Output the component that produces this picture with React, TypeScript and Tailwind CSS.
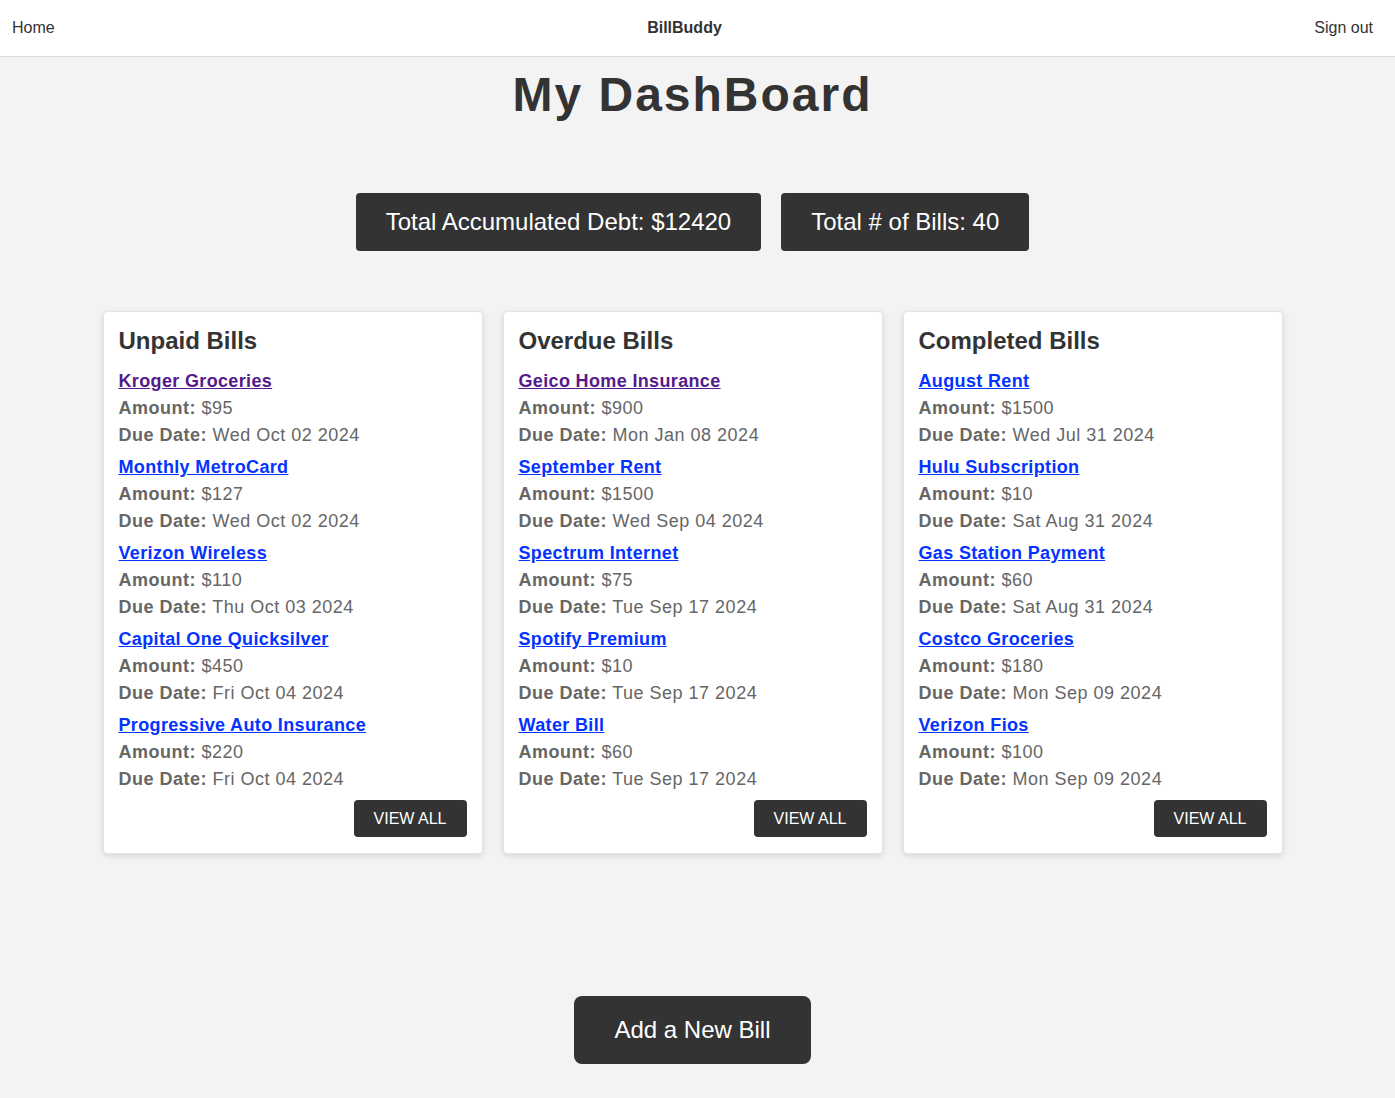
import React from "react";

type Bill = { name: string; amount: string; due: string; visited?: boolean };

const columns: { title: string; bills: Bill[] }[] = [
  {
    title: "Unpaid Bills",
    bills: [
      { name: "Kroger Groceries", amount: "$95", due: "Wed Oct 02 2024", visited: true },
      { name: "Monthly MetroCard", amount: "$127", due: "Wed Oct 02 2024" },
      { name: "Verizon Wireless", amount: "$110", due: "Thu Oct 03 2024" },
      { name: "Capital One Quicksilver", amount: "$450", due: "Fri Oct 04 2024" },
      { name: "Progressive Auto Insurance", amount: "$220", due: "Fri Oct 04 2024" },
    ],
  },
  {
    title: "Overdue Bills",
    bills: [
      { name: "Geico Home Insurance", amount: "$900", due: "Mon Jan 08 2024", visited: true },
      { name: "September Rent", amount: "$1500", due: "Wed Sep 04 2024" },
      { name: "Spectrum Internet", amount: "$75", due: "Tue Sep 17 2024" },
      { name: "Spotify Premium", amount: "$10", due: "Tue Sep 17 2024" },
      { name: "Water Bill", amount: "$60", due: "Tue Sep 17 2024" },
    ],
  },
  {
    title: "Completed Bills",
    bills: [
      { name: "August Rent", amount: "$1500", due: "Wed Jul 31 2024" },
      { name: "Hulu Subscription", amount: "$10", due: "Sat Aug 31 2024" },
      { name: "Gas Station Payment", amount: "$60", due: "Sat Aug 31 2024" },
      { name: "Costco Groceries", amount: "$180", due: "Mon Sep 09 2024" },
      { name: "Verizon Fios", amount: "$100", due: "Mon Sep 09 2024" },
    ],
  },
];

export default function App() {
  return (
    <div className="min-h-[1098px] bg-[#f3f3f3] font-['Liberation_Sans',Arial,sans-serif] text-[#333]">
      <nav className="h-[57px] bg-white border-b border-[#dcdcdc] flex items-center justify-between pl-3 pr-[22px] text-[16px]">
        <a className="text-[#333]">Home</a>
        <span className="font-bold text-[#333]">BillBuddy</span>
        <a className="text-[#333]">Sign out</a>
      </nav>

      <div className="pr-[10px]">
        <h1 className="text-center text-[48px] font-bold tracking-[2px] leading-[56px] mt-[10px] text-[#333]">
          My DashBoard
        </h1>

        <div className="flex justify-center gap-5 mt-[70px]">
          <div className="bg-[#333] text-white text-[24px] rounded-[4px] h-[58px] px-[30px] flex items-center">
            Total Accumulated Debt: $12420
          </div>
          <div className="bg-[#333] text-white text-[24px] rounded-[4px] h-[58px] px-[30px] flex items-center">
            Total # of Bills: 40
          </div>
        </div>

        <div className="flex justify-center gap-5 mt-[60px]">
          {columns.map((col) => (
            <div
              key={col.title}
              className="w-[380px] h-[543px] bg-white rounded-[4px] border border-[#e2e2e2] shadow-[0_2px_6px_rgba(0,0,0,0.12)] px-[15px] pt-[14px] flex flex-col"
            >
              <h2 className="text-[24px] font-bold leading-[30px] text-[#333] mb-[12px]">{col.title}</h2>
              <div className="flex flex-col gap-[5px]">
                {col.bills.map((b) => (
                  <div key={b.name} className="text-[18px] leading-[27px] text-[#666] tracking-[0.5px]">
                    <a
                      className={
                        "block w-fit font-bold underline tracking-[0.35px] " +
                        (b.visited ? "text-[#551a8b]" : "text-[#0433ff]")
                      }
                    >
                      {b.name}
                    </a>
                    <div>
                      <span className="font-bold">Amount:</span> {b.amount}
                    </div>
                    <div>
                      <span className="font-bold">Due Date:</span> {b.due}
                    </div>
                  </div>
                ))}
              </div>
              <div className="flex justify-end mt-[7px]">
                <button className="bg-[#333] text-white text-[16px] rounded-[4px] w-[113px] h-[37px] flex items-center justify-center">
                  VIEW ALL
                </button>
              </div>
            </div>
          ))}
        </div>

        <div className="flex justify-center mt-[142px]">
          <button className="bg-[#333] text-white text-[24px] rounded-[8px] w-[237px] h-[68px] flex items-center justify-center">
            Add a New Bill
          </button>
        </div>
      </div>
    </div>
  );
}
